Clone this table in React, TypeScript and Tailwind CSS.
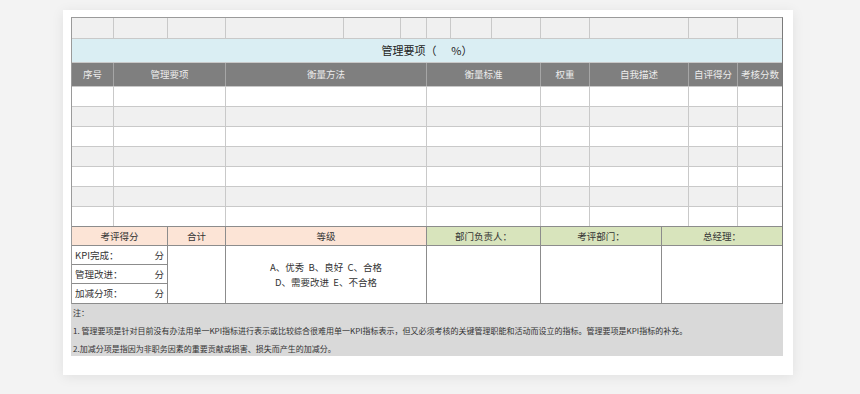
const topCols = [42, 54, 58, 118, 57, 26, 24, 41, 49, 49, 99, 49, 44];

const headCols: { label: string; w: number }[] = [
  { label: "序号", w: 42 },
  { label: "管理要项", w: 112 },
  { label: "衡量方法", w: 201 },
  { label: "衡量标准", w: 114 },
  { label: "权重", w: 49 },
  { label: "自我描述", w: 99 },
  { label: "自评得分", w: 49 },
  { label: "考核分数", w: 44 },
];

const scoreRows = ["KPI完成：", "管理改进：", "加减分项："];

export default function App() {
  return (
    <div
      className="min-h-screen bg-[#f3f3f3] pt-[10px] pl-[63px] text-[#333]"
      style={{ fontFamily: '"Noto Sans CJK SC", "Noto Sans", sans-serif' }}
    >
      <div className="w-[730px] h-[365px] bg-white shadow-[0_2px_12px_rgba(0,0,0,0.08)] pt-[7px] pl-[8px]">
        <div className="w-[712px] border-l border-t border-r border-[#9a9a9a] border-r-[#7a7a7a]">
          {/* top blank row */}
          <div className="flex h-[21px]">
            {topCols.map((w, i) => (
              <div
                key={i}
                style={{ width: w }}
                className="shrink-0 bg-[#f0f0f0] border-r border-b border-[#c9c9c9] last:border-r-0"
              />
            ))}
          </div>

          {/* title */}
          <div className="flex h-[24px] items-center justify-center bg-[#daeef3] border-b border-[#c9c9c9] text-[11px] text-[#222]">
            管理要项（&nbsp;&nbsp;&nbsp;&nbsp;&nbsp;&nbsp;%）
          </div>

          {/* header */}
          <div className="flex h-[23px] bg-[#7f7f7f]">
            {headCols.map((c) => (
              <div
                key={c.label}
                style={{ width: c.w }}
                className="shrink-0 flex items-center justify-center border-r border-[#a6a6a6] last:border-r-0 text-[9.5px] text-[#ececec]"
              >
                {c.label}
              </div>
            ))}
          </div>

          {/* data rows */}
          {Array.from({ length: 7 }).map((_, r) => (
            <div key={r} className={`flex h-[20px] ${r % 2 === 1 ? "bg-[#f0f0f0]" : "bg-white"}`}>
              {headCols.map((c) => (
                <div
                  key={c.label}
                  style={{ width: c.w }}
                  className="shrink-0 border-r border-t border-[#c9c9c9] last:border-r-0"
                />
              ))}
            </div>
          ))}

          {/* score section */}
          <div className="flex border-t border-[#8c8c8c] border-b">
            <div className="w-[96px] shrink-0 border-r border-[#8c8c8c]">
              <div className="h-[19px] bg-[#fce4d6] flex items-center justify-center text-[9.5px] border-b border-[#8c8c8c]">
                考评得分
              </div>
              {scoreRows.map((s, i) => (
                <div
                  key={s}
                  className={`h-[19px] flex items-center justify-between px-[3px] text-[9.5px] ${i < 2 ? "border-b border-[#8c8c8c]" : ""}`}
                >
                  <span>{s}</span>
                  <span>分</span>
                </div>
              ))}
            </div>
            <div className="w-[58px] shrink-0 border-r border-[#8c8c8c]">
              <div className="h-[19px] bg-[#fce4d6] flex items-center justify-center text-[9.5px] border-b border-[#8c8c8c]">
                合计
              </div>
            </div>
            <div className="w-[201px] shrink-0 border-r border-[#8c8c8c] flex flex-col">
              <div className="h-[19px] bg-[#fce4d6] flex items-center justify-center text-[9.5px] border-b border-[#8c8c8c]">
                等级
              </div>
              <div className="flex-1 flex flex-col items-center justify-center text-[9.5px] leading-[15px]">
                <div>A、优秀&nbsp;&nbsp;B、良好&nbsp;&nbsp;C、合格</div>
                <div>D、需要改进&nbsp;&nbsp;E、不合格</div>
              </div>
            </div>
            {[
              { t: "部门负责人：", w: 114 },
              { t: "考评部门：", w: 121 },
              { t: "总经理：", w: 120 },
            ].map((c, i) => (
              <div
                key={c.t}
                style={{ width: c.w }}
                className={`shrink-0 ${i < 2 ? "border-r border-[#8c8c8c]" : ""}`}
              >
                <div className="h-[19px] bg-[#d8e4bc] flex items-center justify-center text-[9.5px] border-b border-[#8c8c8c]">
                  {c.t}
                </div>
              </div>
            ))}
          </div>
        </div>

        {/* notes */}
        <div className="w-[712px] h-[52px] bg-[#d9d9d9] px-[2px] text-[8px] leading-[18px] text-[#333]">
          <div>注：</div>
          <div>1. 管理要项是针对目前没有办法用单一KPI指标进行表示或比较综合很难用单一KPI指标表示，但又必须考核的关键管理职能和活动而设立的指标。管理要项是KPI指标的补充。</div>
          <div>2.加减分项是指因为非职务因素的重要贡献或损害、损失而产生的加减分。</div>
        </div>
      </div>
    </div>
  );
}
